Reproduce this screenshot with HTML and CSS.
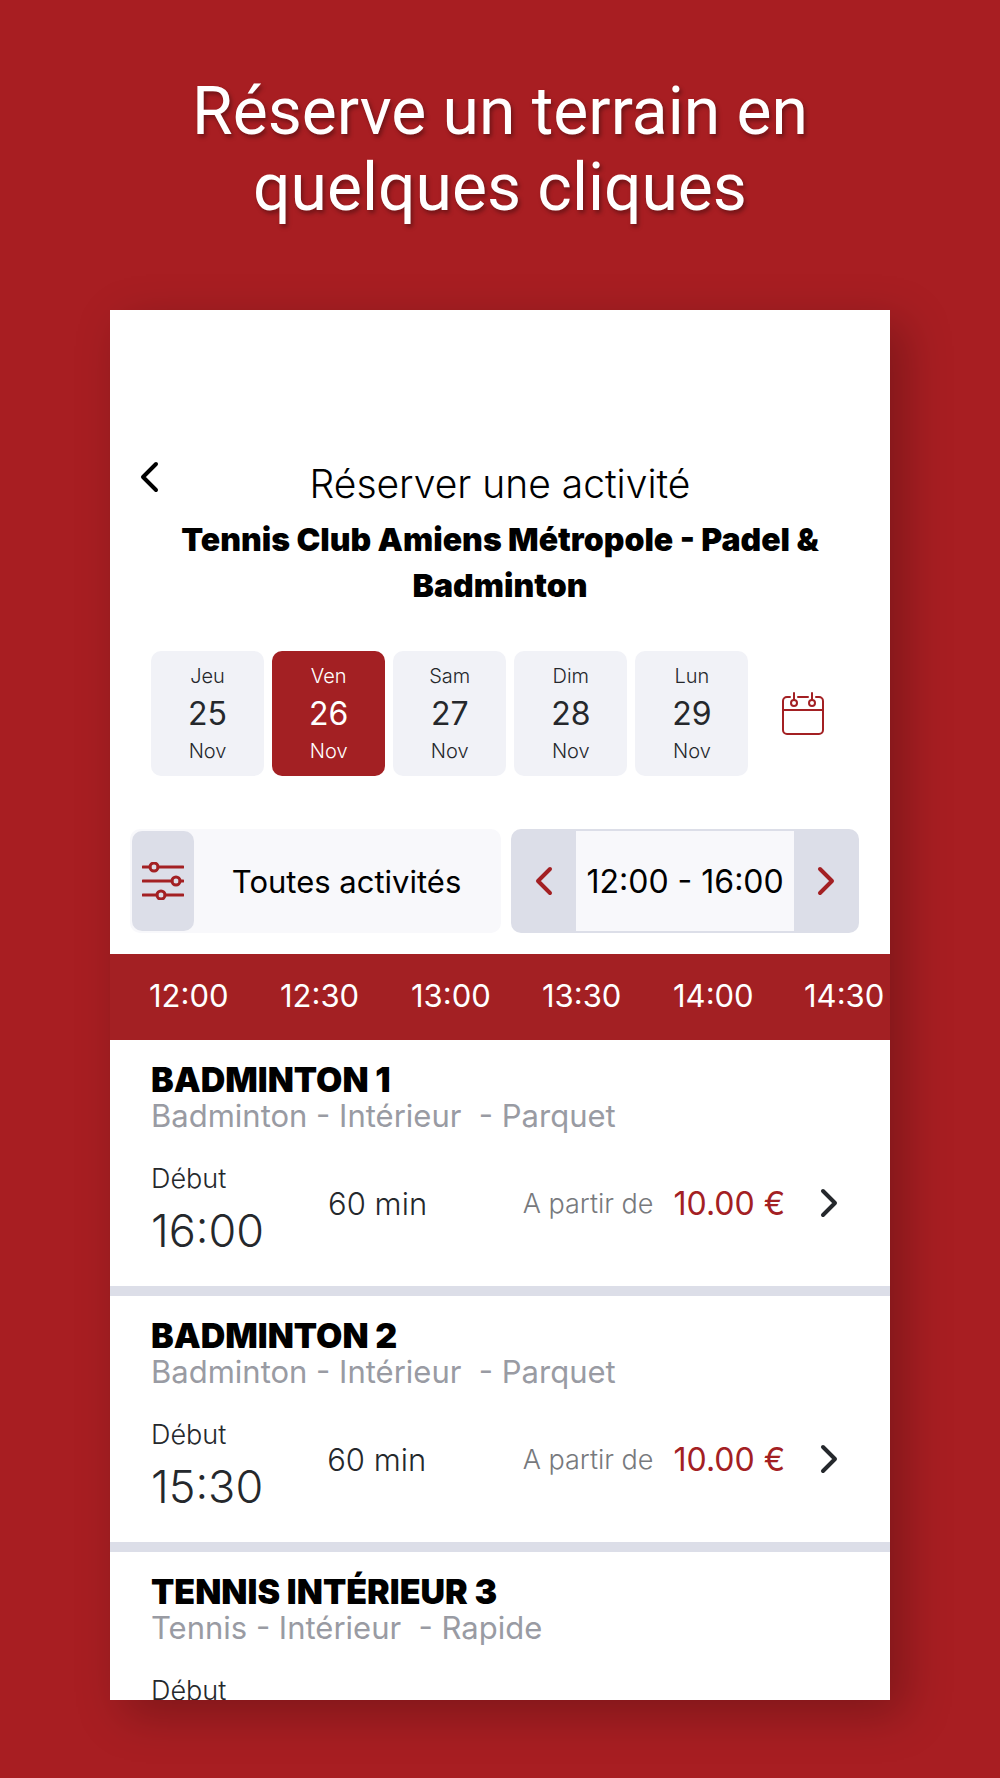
FILE: index.html
```html
<!DOCTYPE html>
<html lang="fr">
<head>
  <meta charset="UTF-8" />
  <meta name="viewport" content="width=device-width, initial-scale=1.0" />
  <title>Réserver une activité</title>
  <link rel="stylesheet" href="styles.css">
</head>
<body>
  <h1 class="headline">Réserve un terrain en<br>quelques cliques</h1>

  <main class="screen">
    <header class="screen-header">
      <button class="icon-btn back" aria-label="Retour">
        <svg width="22" height="34" viewBox="0 0 22 34"><path d="M18 4 5 17l13 13" /></svg>
      </button>
      <h2>Réserver une activité</h2>
    </header>
    <p class="club">Tennis Club Amiens Métropole - Padel &amp; Badminton</p>

    <!-- Days -->
    <div class="days">
      <button class="day"><span>Jeu</span><strong>25</strong><span>Nov</span></button>
      <button class="day active"><span>Ven</span><strong>26</strong><span>Nov</span></button>
      <button class="day"><span>Sam</span><strong>27</strong><span>Nov</span></button>
      <button class="day"><span>Dim</span><strong>28</strong><span>Nov</span></button>
      <button class="day"><span>Lun</span><strong>29</strong><span>Nov</span></button>
      <button class="icon-btn calendar" aria-label="Calendrier">
        <svg width="44" height="44" viewBox="0 0 44 44">
          <path d="M9 5H6a4 4 0 0 0-4 4v29a4 4 0 0 0 4 4h32a4 4 0 0 0 4-4V9a4 4 0 0 0-4-4h-3M17 5h10M2 18h40M13 1v7M31 1v7" />
          <circle cx="13" cy="11" r="3" /><circle cx="31" cy="11" r="3" />
        </svg>
      </button>
    </div>

    <!-- Filters -->
    <div class="filters">
      <button class="activity">
        <span class="activity-icon">
          <svg width="42" height="38" viewBox="0 0 42 38">
            <path d="M1 5h7M16 5h25M1 19h29M38 19h3M1 33h14M23 33h18" />
            <circle cx="12" cy="5" r="4" /><circle cx="34" cy="19" r="4" /><circle cx="19" cy="33" r="4" />
          </svg>
        </span>
        <span class="activity-name">Toutes activités</span>
      </button>
      <div class="range">
        <button class="icon-btn" aria-label="Créneau précédent">
          <svg width="20" height="30" viewBox="0 0 20 30"><path d="M16 3 4 15l12 12" /></svg>
        </button>
        <span class="range-value">12:00 - 16:00</span>
        <button class="icon-btn" aria-label="Créneau suivant">
          <svg width="20" height="30" viewBox="0 0 20 30"><path d="m4 3 12 12L4 27" /></svg>
        </button>
      </div>
    </div>

    <div class="timeline">
      <span>12:00</span><span>12:30</span><span>13:00</span><span>13:30</span><span>14:00</span><span>14:30</span>
    </div>

    <!-- Courts -->
    <section class="court">
      <h3>BADMINTON 1</h3>
      <p class="court-type">Badminton - Intérieur &nbsp;- Parquet</p>
      <div class="slot">
        <div class="start"><span>Début</span><time>16:00</time></div>
        <span class="duration">60 min</span>
        <span class="from">A partir de</span>
        <span class="price">10.00 €</span>
        <button class="icon-btn" aria-label="Réserver Badminton 1">
          <svg width="20" height="30" viewBox="0 0 20 30"><path d="m4 3 12 12L4 27" /></svg>
        </button>
      </div>
    </section>
    <section class="court">
      <h3>BADMINTON 2</h3>
      <p class="court-type">Badminton - Intérieur &nbsp;- Parquet</p>
      <div class="slot">
        <div class="start"><span>Début</span><time>15:30</time></div>
        <span class="duration">60 min</span>
        <span class="from">A partir de</span>
        <span class="price">10.00 €</span>
        <button class="icon-btn" aria-label="Réserver Badminton 2">
          <svg width="20" height="30" viewBox="0 0 20 30"><path d="m4 3 12 12L4 27" /></svg>
        </button>
      </div>
    </section>
    <section class="court">
      <h3>TENNIS INTÉRIEUR 3</h3>
      <p class="court-type">Tennis - Intérieur &nbsp;- Rapide</p>
      <div class="slot">
        <div class="start"><span>Début</span></div>
      </div>
    </section>
  </main>
</body>
</html>
```
FILE: styles.css
```css
:root {
  --red: #a32023;
  --bg: #a81e22;
  --grey: #dcdee8;
  --light: #f1f2f7;
  --pale: #f8f8fb;
  --ink: #25282c;
}

* {
  box-sizing: border-box;
}

body {
  margin: 0;
  height: 100vh;
  padding: 74px 11% 78px;
  display: flex;
  flex-direction: column;
  background: var(--bg);
  font-family: Inter, "Liberation Sans", sans-serif;
  color: var(--ink);
}

h1, h2, h3, p {
  margin: 0;
}

button {
  font: inherit;
  color: inherit;
  border: none;
  padding: 0;
  cursor: pointer;
}

svg {
  display: block;
  fill: none;
  stroke: currentColor;
  stroke-width: 4;
  stroke-linecap: round;
  stroke-linejoin: round;
}

.headline {
  margin-bottom: 84px;
  font-family: Roboto, sans-serif;
  font-size: 66px;
  font-weight: 450;
  line-height: 76px;
  text-align: center;
  color: #fff;
  text-shadow: 2px 3px 4px rgba(0, 0, 0, 0.35);
}

.screen {
  flex: 1;
  min-height: 0;
  overflow: hidden;
  padding-top: 150px;
  background: #fff;
  box-shadow: 14px 14px 44px rgba(0, 0, 0, 0.25);
}

.icon-btn {
  display: flex;
  align-items: center;
  justify-content: center;
  background: none;
}

.screen-header {
  display: grid;
  grid-template-columns: 1fr auto 1fr;
  align-items: start;
  padding: 0 28px;
  color: #000;
}

.back {
  justify-self: start;
}

.screen-header h2 {
  font-size: 39px;
  font-weight: 300;
  line-height: 48px;
}

.club {
  margin-top: 9px;
  padding: 0 40px;
  font-size: 32px;
  font-weight: 900;
  line-height: 46px;
  text-align: center;
  color: #000;
}

.days {
  display: flex;
  gap: 8px;
  margin-top: 42px;
  padding: 0 41px;
}

.day {
  flex: 11;
  display: flex;
  flex-direction: column;
  align-items: center;
  padding: 10px 0;
  border-radius: 10px;
  background: var(--light);
  font-size: 20px;
  font-weight: 300;
  line-height: 30px;
}

.day strong {
  font-size: 32px;
  font-weight: 400;
  line-height: 45px;
}

.day.active {
  background: var(--red);
  color: #fff;
}

.calendar {
  flex: 9;
  color: var(--red);
}

.calendar svg {
  stroke-width: 2;
}

.filters {
  display: flex;
  gap: 10px;
  height: 104px;
  margin-top: 53px;
  padding: 0 31px 0 20px;
  font-size: 31px;
  color: #000;
}

.activity {
  flex: 19;
  display: flex;
  padding: 2px;
  border-radius: 10px;
  background: var(--pale);
}

.activity-icon {
  display: flex;
  align-items: center;
  align-self: stretch;
  padding: 0 10px;
  border-radius: 10px;
  background: var(--grey);
  color: var(--red);
}

.activity-icon svg {
  stroke-width: 3;
}

.activity-name {
  flex: 1;
  align-self: center;
}

.range {
  flex: 18;
  display: flex;
  padding: 2px 0;
  border-radius: 10px;
  background: var(--grey);
}

.range .icon-btn {
  flex: 1;
  color: var(--red);
}

.range-value {
  display: flex;
  align-items: center;
  padding: 0 10px;
  background: var(--pale);
  font-size: 32px;
  white-space: nowrap;
}

.timeline {
  display: flex;
  margin-top: 21px;
  padding: 0 0 2px 39px;
  background: var(--red);
  font-size: 31px;
  line-height: 84px;
  color: #fff;
}

.timeline span {
  flex: none;
  width: 131px;
}

.court {
  padding: 22px 51px 29px 41px;
  border-bottom: 10px solid var(--grey);
}

.court h3 {
  font-size: 34px;
  font-weight: 900;
  line-height: 36px;
  color: #000;
}

.court-type {
  font-size: 31px;
  line-height: 36px;
  color: #999ba3;
}

.slot {
  display: flex;
  align-items: center;
  margin-top: 15px;
  font-size: 27px;
  font-weight: 300;
}

.start {
  display: flex;
  flex-direction: column;
  gap: 8px;
  padding-top: 12px;
  line-height: 36px;
}

.start time {
  font-size: 45px;
  line-height: 52px;
}

.duration {
  margin-left: 64px;
  font-size: 31px;
}

.from {
  margin-left: auto;
  color: #77797d;
}

.price {
  margin: 0 34px 0 20px;
  font-size: 32px;
  font-weight: 400;
  color: var(--red);
}
```
